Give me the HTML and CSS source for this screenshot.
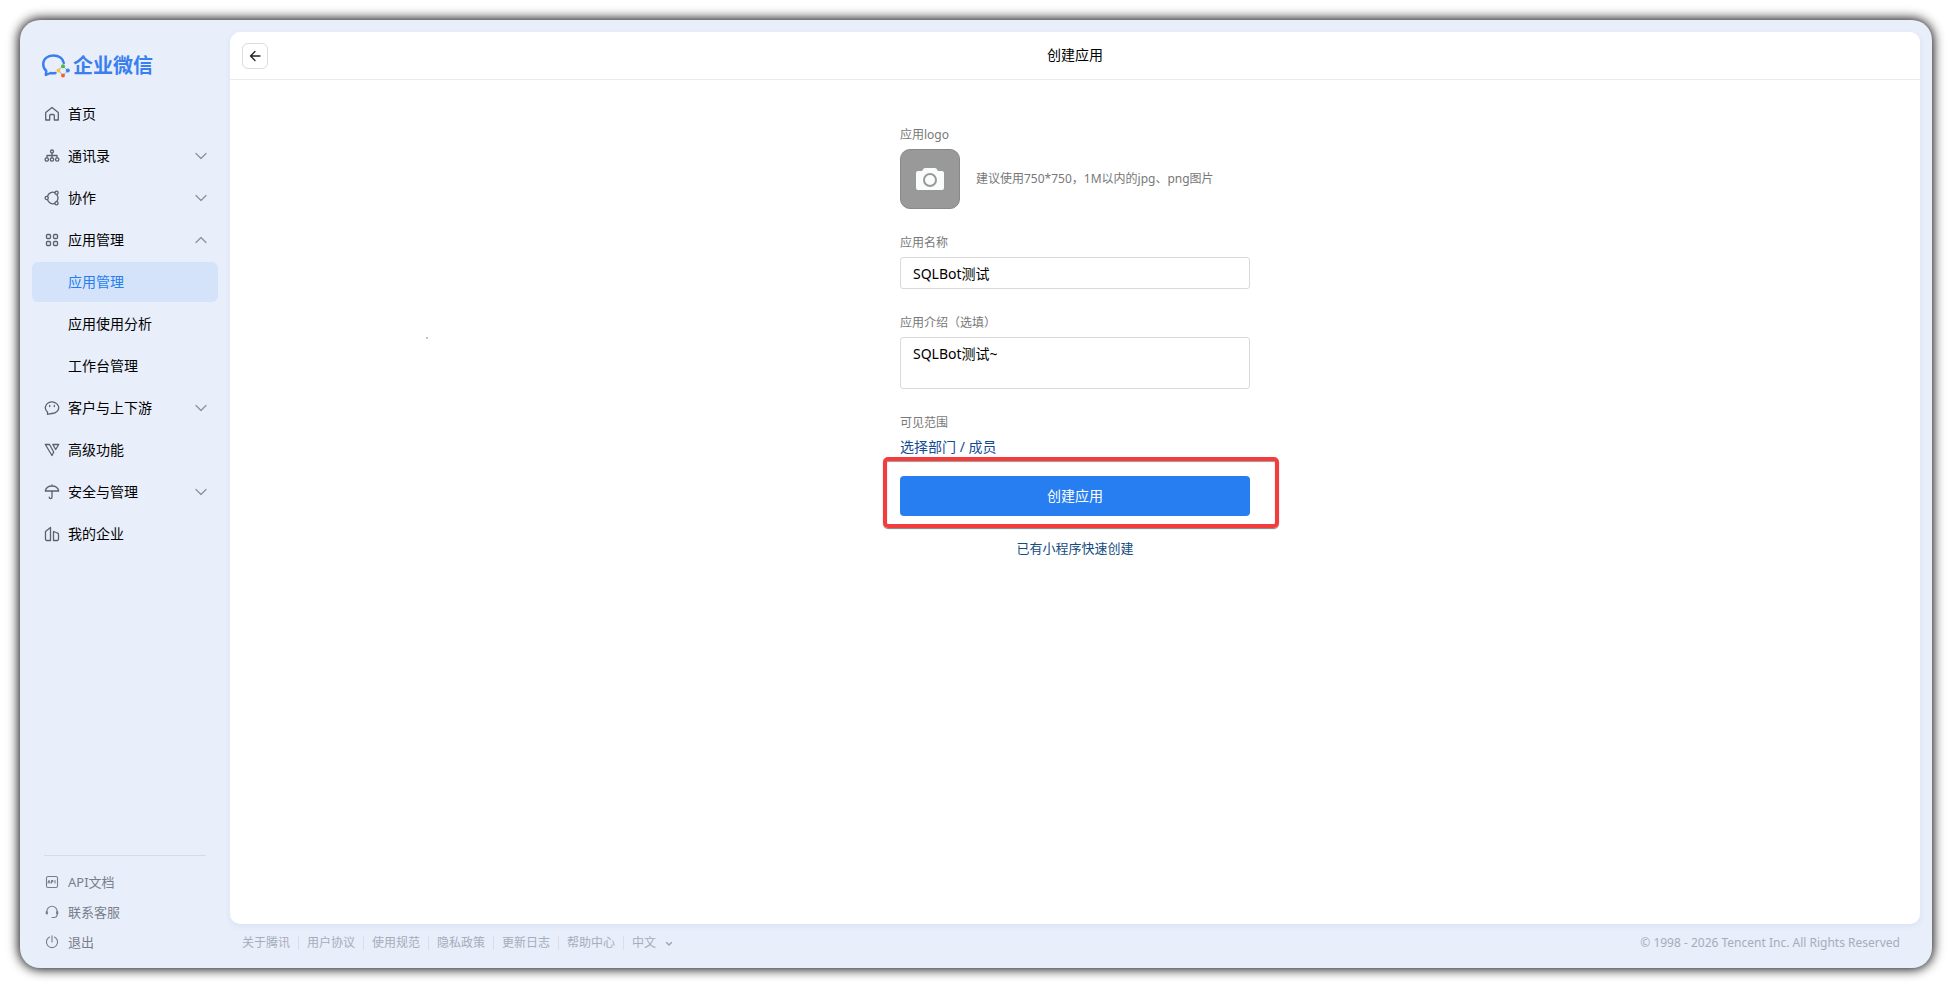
FILE: index.html
```
<!DOCTYPE html>
<html lang="zh-CN">
<head>
    <meta charset="UTF-8">
    <meta name="viewport" content="width=device-width, initial-scale=1.0">
    <title>企业微信 - 创建应用</title>
    <link rel="stylesheet" href="styles.css">
</head>
<body>
    <div class="window">
        <aside class="sidebar">
            <a class="brand" href="#">
                <svg width="30" height="26" viewBox="0 0 30 26" fill="none">
                    <path d="M14.500 20 A12 12 0 0 1 9.500 20 L4.800 22 L5.300 18 A9 8.900 0 0 1 2.200 11 C2.200 6 6.500 2.500 12.300 2.500 C18 2.500 22 5.500 22.800 10" stroke="#3a7ff0" stroke-width="2.400" stroke-linejoin="round"/>
                    <path d="M22 13.500 L27 17.500 L22 22.500 L17.500 17.500Z" stroke="#8fb0ea" stroke-width="1"/>
                    <circle cx="22" cy="13.300" r="2" fill="#53b944"/>
                    <circle cx="26.800" cy="17.500" r="2" fill="#3a7ff0"/>
                    <circle cx="22" cy="22.500" r="2" fill="#f4622c"/>
                    <circle cx="17.500" cy="17.500" r="2" fill="#fbc334"/>
                </svg>
                <span>企业微信</span>
            </a>

            <nav class="menu">
                <a class="item" href="#">
                    <svg class="icon" viewBox="0 0 16 16"><path d="M1.700 14V6.500L8 1.500l6.300 5V14h-4V9.500a1 1 0 0 0-1-1H6.700a1 1 0 0 0-1 1V14z"/></svg>
                    <span>首页</span>
                </a>
                <a class="item" href="#">
                    <svg class="icon" viewBox="0 0 16 16"><circle cx="8" cy="3.500" r="1.500"/><path d="M8 5v5M3 9.500v-2h10v2"/><circle cx="2.800" cy="11.500" r="1.700"/><circle cx="8" cy="11.500" r="1.700"/><circle cx="13.200" cy="11.500" r="1.700"/></svg>
                    <span>通讯录</span>
                    <svg class="arrow" viewBox="0 0 12 8"><path d="M1 1.500l5 5 5-5"/></svg>
                </a>
                <a class="item" href="#">
                    <svg class="icon" viewBox="0 0 16 16"><circle cx="2.700" cy="8" r="1.600"/><circle cx="12.500" cy="2.800" r="1.600"/><circle cx="12.500" cy="13.200" r="1.600"/><path d="M3.500 6.300A5.500 5.500 0 0 1 10.800 2.600M3.500 9.700a5.500 5.500 0 0 0 7.300 3.700M12.800 4.600a6 6 0 0 1 0 6.800"/></svg>
                    <span>协作</span>
                    <svg class="arrow" viewBox="0 0 12 8"><path d="M1 1.500l5 5 5-5"/></svg>
                </a>
                <a class="item" href="#">
                    <svg class="icon" viewBox="0 0 16 16"><rect x="2.500" y="2.500" width="4" height="4" rx="1"/><rect x="9.500" y="2.500" width="4" height="4" rx="1"/><rect x="2.500" y="9.500" width="4" height="4" rx="1"/><rect x="9.500" y="9.500" width="4" height="4" rx="1"/></svg>
                    <span>应用管理</span>
                    <svg class="arrow" viewBox="0 0 12 8"><path d="M1 6.500l5-5 5 5"/></svg>
                </a>
                <a class="item sub active" href="#">应用管理</a>
                <a class="item sub" href="#">应用使用分析</a>
                <a class="item sub" href="#">工作台管理</a>
                <a class="item" href="#">
                    <svg class="icon" viewBox="0 0 16 16"><path d="M3.500 14.300V12A6.700 5.800 0 1 1 8 13.500C6.500 13.500 5 14.300 3.500 14.300z"/><path d="M5.700 5.500v1M10.300 5.500v1"/></svg>
                    <span>客户与上下游</span>
                    <svg class="arrow" viewBox="0 0 12 8"><path d="M1 1.500l5 5 5-5"/></svg>
                </a>
                <a class="item" href="#">
                    <svg class="icon" viewBox="0 0 16 16"><path d="M1.300 2.500h4.200l4.200 7.500-1.700 3.500zM8.800 2.500h5.900l-3 5z"/></svg>
                    <span>高级功能</span>
                </a>
                <a class="item" href="#">
                    <svg class="icon" viewBox="0 0 16 16"><path d="M1.300 7C2 3.800 4.700 2 8 2s6 1.800 6.700 5zM8 1v1M8 7v6.200a1.400 1.400 0 0 1-2.800 0"/></svg>
                    <span>安全与管理</span>
                    <svg class="arrow" viewBox="0 0 12 8"><path d="M1 1.500l5 5 5-5"/></svg>
                </a>
                <a class="item" href="#">
                    <svg class="icon" viewBox="0 0 16 16"><path d="M6.500 1.500v13H2.800a1.300 1.300 0 0 1-1.300-1.300V5.500zM9.500 5.500l3.800 1.500a1.500 1.500 0 0 1 1.200 1.500v4.700a1.300 1.300 0 0 1-1.300 1.300H9.500z"/></svg>
                    <span>我的企业</span>
                </a>
            </nav>

            <nav class="tools">
                <a href="#">
                    <svg class="icon" viewBox="0 0 16 16"><rect x="2.500" y="2.500" width="11" height="11" rx="1.500"/><path d="M4 9l1-2.500L6 9M7.500 9V6.500h1.300v1.300H7.500M11 6.500V9"/></svg>
                    <span>API文档</span>
                </a>
                <a href="#">
                    <svg class="icon" viewBox="0 0 16 16"><path d="M2.800 9.500V7.500a5.200 5.200 0 0 1 10.400 0V10c0 2-1.200 3.500-3.200 3.500H8"/><path d="M2.800 8V9.500M13.200 8V9.500" stroke-width="2.200"/></svg>
                    <span>联系客服</span>
                </a>
                <a href="#">
                    <svg class="icon" viewBox="0 0 16 16"><path d="M5.500 3A5.600 5.600 0 1 0 10.500 3M8 1.800V8"/></svg>
                    <span>退出</span>
                </a>
            </nav>
        </aside>

        <div class="main">
            <main class="panel">
                <header class="panel-header">
                    <button class="back" type="button" aria-label="返回">
                        <svg viewBox="0 0 12 12"><path d="M11 6H1.500M6 1.500L1.500 6 6 10.500"/></svg>
                    </button>
                    <h1>创建应用</h1>
                </header>

                <form class="form">
                    <div class="field">
                        <label for="logo">应用logo</label>
                        <div class="logo-row">
                            <button class="logo-upload" id="logo" type="button">
                                <svg width="28" height="22" viewBox="0 0 28 22"><path fill="#fafcfc" d="M2 3h4l1.500-2.200A2 2 0 0 1 9 0h10a2 2 0 0 1 1.500.8L22 3h4a2 2 0 0 1 2 2v15a2 2 0 0 1-2 2H2a2 2 0 0 1-2-2V5a2 2 0 0 1 2-2z"/><circle cx="14" cy="12" r="6" fill="none" stroke="#999" stroke-width="2"/></svg>
                            </button>
                            <span class="hint">建议使用750*750，1M以内的jpg、png图片</span>
                        </div>
                    </div>
                    <div class="field">
                        <label for="name">应用名称</label>
                        <input id="name" type="text" value="SQLBot测试">
                    </div>
                    <div class="field">
                        <label for="intro">应用介绍（选填）</label>
                        <textarea id="intro">SQLBot测试~</textarea>
                    </div>
                    <div class="scope">
                        <p>可见范围</p>
                        <a href="#">选择部门 / 成员</a>
                    </div>
                    <div class="submit">
                        <button type="button">创建应用</button>
                    </div>
                    <a class="quick" href="#">已有小程序快速创建</a>
                </form>
                <span class="speck"></span>
            </main>

            <footer class="footer">
                <nav class="links">
                    <a href="#">关于腾讯</a>
                    <a href="#">用户协议</a>
                    <a href="#">使用规范</a>
                    <a href="#">隐私政策</a>
                    <a href="#">更新日志</a>
                    <a href="#">帮助中心</a>
                    <a href="#">中文 <svg viewBox="0 0 8 6"><path d="M1.500 1.500L4 4l2.500-2.500"/></svg></a>
                </nav>
                <p>© 1998 - 2026 Tencent Inc. All Rights Reserved</p>
            </footer>
        </div>
    </div>
</body>
</html>
```
FILE: styles.css
```
* {
    box-sizing: border-box;
}

body {
    margin: 0;
    padding: 20px;
    min-height: 100vh;
    display: flex;
    background: #fff;
    color: #000;
    font-family: "Noto Sans", "Noto Sans CJK SC", sans-serif;
    font-size: 14px;
    line-height: 20px;
}

a {
    color: inherit;
    text-decoration: none;
}

p {
    margin: 0;
}

button,
input,
textarea {
    font: inherit;
}

svg {
    flex: none;
    fill: none;
    stroke-linecap: round;
    stroke-linejoin: round;
}

.window {
    flex: 1;
    display: flex;
    border-radius: 20px;
    background: #e8eefa;
    box-shadow: 0 0 12px 1px #000;
}

/* sidebar */
.sidebar {
    width: 210px;
    padding: 31px 12px 11px;
    display: flex;
    flex-direction: column;
}

.brand {
    display: flex;
    align-items: center;
    gap: 2px;
    height: 30px;
    padding-left: 9px;
    margin-bottom: 13px;
    color: #3a7ff0;
    font-size: 20px;
    font-weight: 700;
}

.menu {
    display: flex;
    flex-direction: column;
    gap: 2px;
}

.item {
    display: flex;
    align-items: center;
    gap: 8px;
    height: 40px;
    padding: 0 11px 0 12px;
    border-radius: 6px;
}

.sub {
    padding-left: 36px;
}

.active {
    background: #d4e3fa;
    color: #267ef0;
}

.icon {
    width: 16px;
    height: 16px;
    stroke: #5c626b;
    stroke-width: 1.3;
}

.arrow {
    width: 12px;
    height: 8px;
    margin-left: auto;
    stroke: #8a909c;
    stroke-width: 1.2;
}

.tools {
    display: flex;
    flex-direction: column;
    margin: auto 12px 0;
    padding-top: 11px;
    border-top: 1px solid #d5dbe8;
    color: #787e8a;
    font-size: 13px;
}

.tools a {
    display: flex;
    align-items: center;
    gap: 8px;
    height: 30px;
}

.tools .icon {
    stroke: #787e8a;
    stroke-width: 1.1;
}

/* main area */
.main {
    flex: 1;
    display: flex;
    flex-direction: column;
    padding: 12px 12px 0 0;
}

.panel {
    flex: 1;
    position: relative;
    border-radius: 10px;
    background: #fff;
    box-shadow: 0 2px 6px rgba(60, 90, 150, 0.08);
}

.panel-header {
    display: grid;
    grid-template-columns: 26px 1fr 26px;
    align-items: center;
    height: 48px;
    padding: 0 12px;
    border-bottom: 1px solid #ebebeb;
}

.panel-header h1 {
    margin: 0;
    padding-bottom: 2px;
    font-size: 14px;
    font-weight: 400;
    text-align: center;
}

.back {
    display: flex;
    align-items: center;
    justify-content: center;
    width: 26px;
    height: 26px;
    padding: 0;
    border: 1px solid #dcdcde;
    border-radius: 6px;
    background: #fff;
}

.back svg {
    width: 12px;
    height: 12px;
    stroke: #222;
    stroke-width: 1.3;
}

.form {
    display: flex;
    flex-direction: column;
    width: 350px;
    margin: 0 auto;
    padding-top: 45px;
}

.field {
    display: flex;
    flex-direction: column;
    gap: 4px;
    margin-bottom: 24px;
}

.field label,
.scope p,
.hint {
    color: #787878;
    font-size: 12px;
}

.logo-row {
    display: flex;
    align-items: center;
    gap: 16px;
}

.logo-upload {
    display: flex;
    align-items: center;
    justify-content: center;
    width: 60px;
    height: 60px;
    padding: 0;
    border: 1px solid #888;
    border-radius: 10px;
    background: #999;
}

.field input,
.field textarea {
    display: block;
    width: 100%;
    height: 32px;
    padding: 0 12px;
    border: 1px solid #d9d9d9;
    border-radius: 3px;
    background: #fff;
    color: #000;
    outline: none;
}

.field textarea {
    height: 52px;
    padding: 6px 12px;
    resize: none;
}

.scope {
    display: flex;
    flex-direction: column;
    gap: 4px;
    color: #134b96;
}

/* highlighted button, the frame reaches past the form column */
.submit {
    margin: 0 -29px 0 -17px;
    padding: 15px 25px 8px 13px;
    border: 4px solid #f43c3c;
    border-radius: 5px;
    box-shadow: 0 1px 1px rgba(0, 0, 0, 0.5), inset 0 1px 1px rgba(0, 0, 0, 0.4);
}

.submit button {
    display: block;
    width: 100%;
    height: 40px;
    border: 0;
    border-radius: 4px;
    background: #267ef0;
    color: #fff;
}

.quick {
    margin-top: 10px;
    align-self: center;
    color: #134b80;
    font-size: 13px;
}

.speck {
    position: absolute;
    top: 305px;
    left: 196px;
    width: 2px;
    height: 2px;
    background: #c4c4c4;
}

.footer {
    display: flex;
    align-items: center;
    justify-content: space-between;
    height: 44px;
    padding: 0 20px 6px 12px;
    color: #a6adba;
    font-size: 12px;
}

.links {
    display: flex;
    align-items: center;
}

.links a {
    line-height: 14px;
}

.links a + a {
    margin-left: 8px;
    padding-left: 8px;
    border-left: 1px solid #d8deea;
}

.links svg {
    width: 8px;
    height: 6px;
    margin-left: 6px;
    stroke: #9aa1af;
    stroke-width: 1.3;
}
```
